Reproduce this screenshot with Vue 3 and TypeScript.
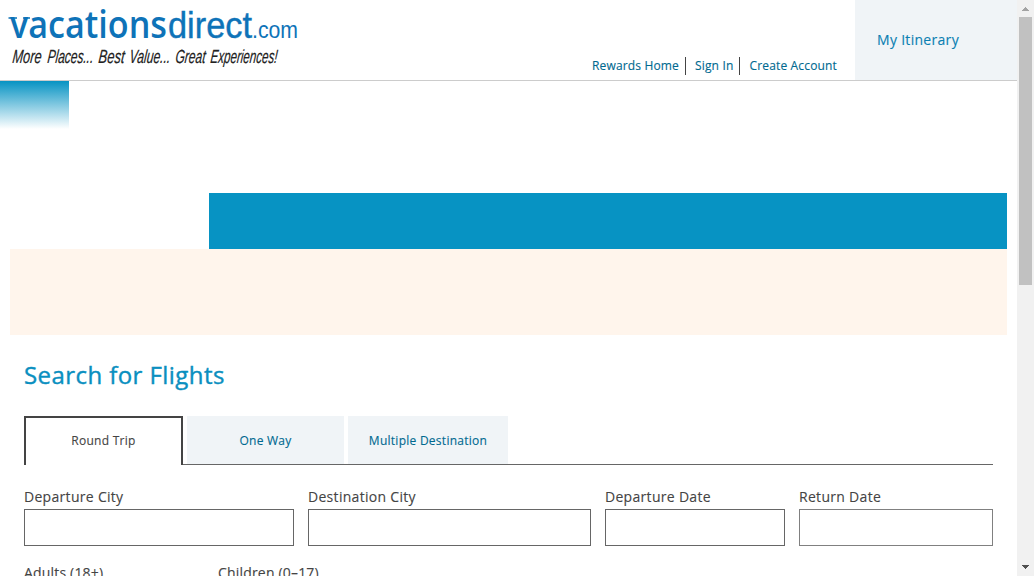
<script setup lang="ts">
interface Field {
  label: string
  size: string
}

const links: string[] = ['Rewards Home', 'Sign In', 'Create Account']
const fields: Field[] = [
  { label: 'Departure City', size: 'departure' },
  { label: 'Destination City', size: 'destination' },
  { label: 'Departure Date', size: 'leave-date' },
  { label: 'Return Date', size: 'return-date' },
]
</script>

<template>
  <div class="window">
    <div class="page">
      <header class="header">
        <svg class="logo" width="310" height="80" viewBox="0 0 310 80" role="img" aria-label="vacationsdirect.com">
          <g class="brand">
            <text class="vacations" x="10" y="38" textLength="157" lengthAdjust="spacingAndGlyphs">vacations</text>
            <text class="direct" x="168" y="38" textLength="84" lengthAdjust="spacingAndGlyphs">direct</text>
            <text class="com" x="252" y="38" textLength="46" lengthAdjust="spacingAndGlyphs">.com</text>
            <path class="serif" d="M8.5 18h8.5M23 18h7" />
          </g>
          <g class="tagline" transform="translate(0 63) skewX(-6)">
            <text x="12" y="0" textLength="29" lengthAdjust="spacingAndGlyphs">More</text>
            <text x="47" y="0" textLength="46" lengthAdjust="spacingAndGlyphs">Places...</text>
            <text x="98" y="0" textLength="26" lengthAdjust="spacingAndGlyphs">Best</text>
            <text x="129" y="0" textLength="41" lengthAdjust="spacingAndGlyphs">Value...</text>
            <text x="175" y="0" textLength="30" lengthAdjust="spacingAndGlyphs">Great</text>
            <text x="210" y="0" textLength="67" lengthAdjust="spacingAndGlyphs">Experiences!</text>
          </g>
        </svg>
        <nav class="links">
          <a v-for="link in links" :key="link" class="link">{{ link }}</a>
        </nav>
        <a class="itinerary">My Itinerary</a>
      </header>
      <div class="fade"></div>
      <div class="banner"></div>
      <div class="notice"></div>
      <main class="search">
        <h1 class="title">Search for Flights</h1>
        <div class="tabs">
          <button class="tab active">Round Trip</button>
          <button class="tab one-way">One Way</button>
          <button class="tab multiple">Multiple Destination</button>
        </div>
        <div class="fields">
          <label v-for="field in fields" :key="field.label" class="field" :class="field.size">
            <span class="label">{{ field.label }}</span>
            <input class="input" type="text" />
          </label>
        </div>
        <div class="travellers">
          <span class="label adults">Adults (18+)</span>
          <span class="label">Children (0–17)</span>
        </div>
      </main>
    </div>
    <div class="scrollbar">
      <svg class="arrow" width="17" height="17" viewBox="0 0 17 17" shape-rendering="crispEdges">
        <path fill="#a3a3a3" d="M8 7h1v1h1v1h1v1h1v1H5v-1h1V9h1V8h1z" />
      </svg>
      <div class="thumb"></div>
      <svg class="arrow down" width="17" height="17" viewBox="0 0 17 17" shape-rendering="crispEdges">
        <path fill="#505050" d="M5 6h7v1h-1v1h-1v1H9v1H8V9H7V8H6V7H5z" />
      </svg>
    </div>
  </div>
</template>

<style>
html,
body {
  margin: 0;
  overflow: hidden;
  background: #fff;
}
</style>

<style scoped>
.window {
  display: flex;
  width: 1034px;
  height: 576px;
  overflow: hidden;
  font-family: "Open Sans", sans-serif;
  font-weight: 400;
  color: #444;
}
.page {
  width: 1017px;
  height: 576px;
  overflow: hidden;
  background: #fff;
}
.header {
  display: flex;
  height: 80px;
  border-bottom: 1px solid #ccc;
}
.logo {
  flex: none;
}
.brand {
  fill: #0e73b8;
  font-family: "Liberation Sans", Arial, sans-serif;
}
.vacations {
  font-family: "Open Sans", sans-serif;
  font-size: 38px;
  font-weight: 600;
}
.direct {
  font-size: 37px;
  stroke: #0e73b8;
  stroke-width: 0.4px;
}
.com {
  font-size: 24px;
}
.serif {
  fill: none;
  stroke: #0e73b8;
  stroke-width: 1.6px;
}
.tagline {
  fill: #222;
  stroke: #222;
  stroke-width: 0.2px;
  font-family: "Liberation Sans Narrow", "Liberation Sans", sans-serif;
  font-size: 19px;
  font-style: italic;
}
.links,
.itinerary,
.title,
.tab,
.label {
  -webkit-text-stroke: 0.12px currentColor;
}
.links {
  display: flex;
  margin-left: auto;
  padding: 57px 18px 0 0;
}
.link {
  height: 18px;
  padding-right: 6px;
  margin-right: 9px;
  border-right: 1px solid #444;
  font-size: 12px;
  letter-spacing: 0.16px;
  line-height: 18px;
  color: #006990;
}
.link:last-child {
  padding-right: 0;
  margin-right: 0;
  border-right: 0;
}
.itinerary {
  box-sizing: border-box;
  width: 162px;
  padding-left: 22px;
  background: #f0f4f7;
  font-size: 14px;
  letter-spacing: 0.3px;
  line-height: 80px;
  color: #0a7fb2;
}
.fade {
  width: 69px;
  height: 48px;
  background: linear-gradient(#0793c3, #fff);
}
.banner {
  height: 56px;
  margin: 64px 10px 0 209px;
  background: #0793c3;
}
.notice {
  height: 86px;
  margin: 0 10px;
  background: #fff5ec;
}
.search {
  margin: 0 24px;
}
.title {
  margin: 0;
  padding-top: 23px;
  font-size: 24px;
  font-weight: 400;
  letter-spacing: 0.43px;
  line-height: 33px;
  color: #0a8fc0;
  -webkit-text-stroke-width: 0.4px;
}
.tabs {
  display: flex;
  gap: 4px;
  height: 48px;
  margin-top: 25px;
  border-bottom: 1px solid #666;
}
.tab {
  box-sizing: border-box;
  height: 48px;
  padding: 0;
  border: 0;
  background: #f0f4f7;
  font: inherit;
  font-size: 12px;
  letter-spacing: 0.26px;
  line-height: 49px;
  color: #006990;
}
.active {
  width: 159px;
  height: 49px;
  padding-bottom: 2px;
  border: 2px solid #444;
  border-bottom: 0;
  background: #fff;
  line-height: 45px;
  color: #444;
}
.one-way {
  width: 157px;
}
.multiple {
  width: 160px;
}
.fields {
  display: flex;
  gap: 14px;
  padding-top: 22px;
}
.field {
  display: block;
}
.label {
  display: block;
  font-size: 14px;
  letter-spacing: 0.3px;
  line-height: 20px;
  white-space: nowrap;
}
.input {
  display: block;
  box-sizing: border-box;
  width: 100%;
  height: 37px;
  margin: 2px 0 0;
  padding: 0 8px;
  border: 1px solid #666;
  border-radius: 0;
  background: #fff;
}
.departure {
  width: 270px;
}
.destination {
  width: 283px;
}
.leave-date {
  width: 180px;
}
.return-date {
  width: 194px;
}
.return-date .input {
  border-color: #808080;
}
.travellers {
  display: flex;
  padding-top: 17px;
}
.travellers .label {
  letter-spacing: 0.18px;
}
.adults {
  width: 194px;
}
.scrollbar {
  display: flex;
  flex-direction: column;
  width: 17px;
  height: 576px;
  background: #f1f1f1;
}
.arrow {
  flex: none;
}
.thumb {
  height: 268px;
  margin: 0 2px;
  background: #c1c1c1;
}
.down {
  margin-top: auto;
}
</style>
